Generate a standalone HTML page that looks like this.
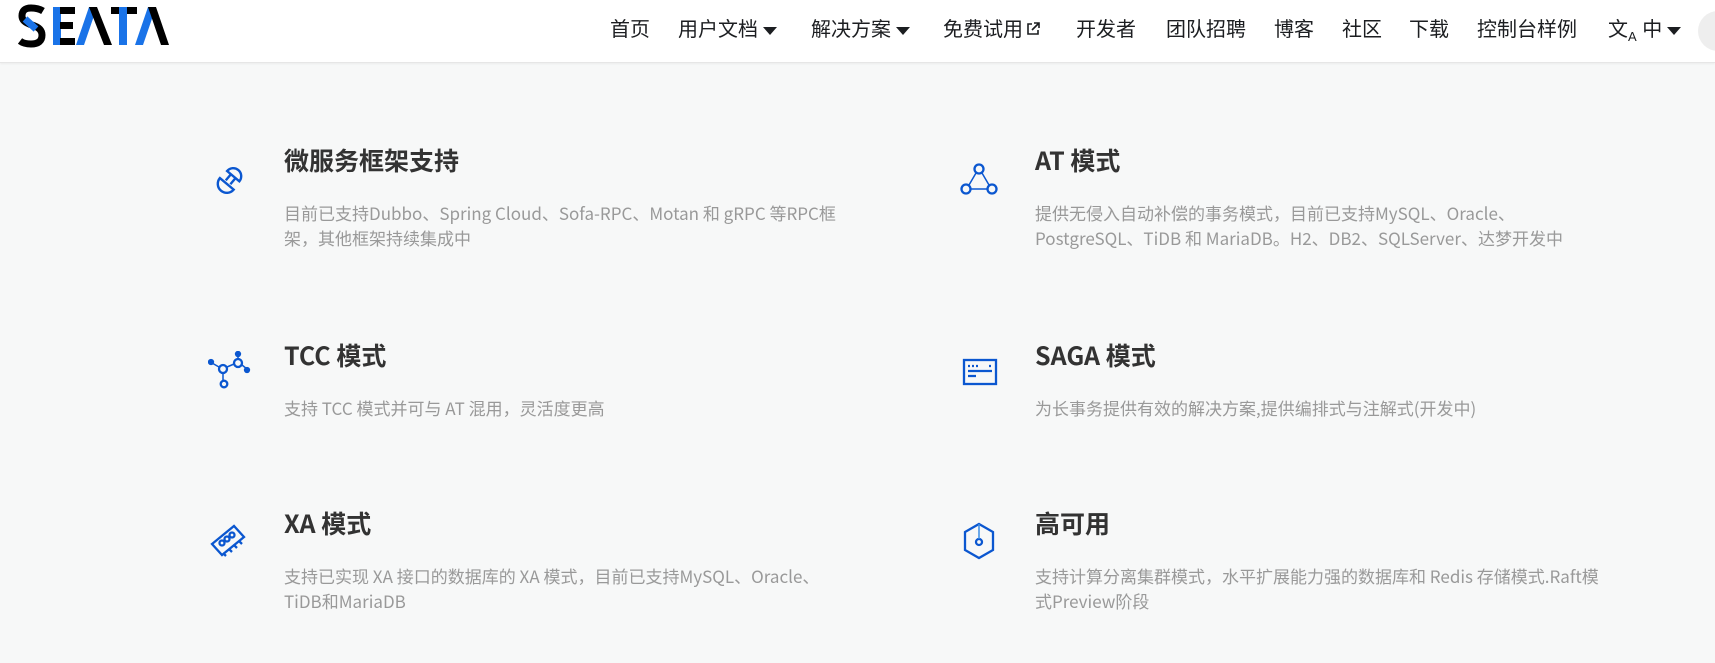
<!DOCTYPE html>
<html><head><meta charset="utf-8"><style>
*{margin:0;padding:0;box-sizing:border-box}
body{width:1715px;height:663px;overflow:hidden;background:#f7f8f8;font-family:"Liberation Sans","Noto Sans CJK SC",sans-serif;position:relative}
.hdr{position:absolute;left:0;top:0;width:1715px;height:63px;background:#fff;border-bottom:1px solid #e6e6e6;box-shadow:0 1px 2px rgba(0,0,0,.05)}
.logo{position:absolute;left:0;top:0}
.nav{position:absolute;top:13px;font-size:20px;color:#1c1e21;white-space:nowrap}
.caret{display:inline-block;width:0;height:0;border-left:7px solid transparent;border-right:7px solid transparent;border-top:8px solid #1c1e21;vertical-align:middle;margin-left:5px}
.t{position:absolute;font-size:25px;font-weight:bold;color:#333;white-space:nowrap;font-family:"Noto Sans CJK SC",sans-serif;line-height:32px}
.d{position:absolute;font-size:17px;line-height:25px;color:#999;white-space:nowrap;font-family:"Noto Sans CJK SC",sans-serif}
svg.i{position:absolute}
</style></head><body>
<div class="hdr">
<svg class="logo" width="180" height="50" viewBox="0 0 180 50">
<path d="M43 11 Q38 8 31 8 Q22 8 22 16 Q22 22 32 25 Q42 28 42 35 Q42 44 31 44 Q24 44 20 41" fill="none" stroke="#000" stroke-width="7"/>
<path d="M25 19 L36 29" stroke="#1a73e8" stroke-width="7"/>
<rect x="53" y="7" width="8" height="38" fill="#1a73e8"/>
<rect x="60" y="7" width="15" height="7" fill="#000"/><rect x="60" y="22" width="13" height="7" fill="#000"/><rect x="60" y="38" width="15" height="7" fill="#000"/>
<path d="M76 45 L89 7 L97 7 L84 45Z" fill="#1a73e8"/><path d="M89 7 L97 7 L112 45 L104 45Z" fill="#000"/>
<rect x="111" y="7" width="26" height="7" fill="#000"/><rect x="119" y="7" width="8" height="38" fill="#1a73e8"/>
<path d="M135 45 L148 7 L156 7 L143 45Z" fill="#1a73e8"/><path d="M148 7 L156 7 L169 45 L161 45Z" fill="#000"/>
</svg>
<div class="nav" style="left:610px">首页</div>
<div class="nav" style="left:678px">用户文档<span class="caret"></span></div>
<div class="nav" style="left:811px">解决方案<span class="caret"></span></div>
<div class="nav" style="left:943px">免费试用<svg width="14" height="14" viewBox="0 0 14 14" style="margin-left:3px"><path d="M6 2H2v10h10V8M8 1h5v5M13 1L6 8" fill="none" stroke="#1c1e21" stroke-width="1.6"/></svg></div>
<div class="nav" style="left:1076px">开发者</div>
<div class="nav" style="left:1166px">团队招聘</div>
<div class="nav" style="left:1274px">博客</div>
<div class="nav" style="left:1342px">社区</div>
<div class="nav" style="left:1409px">下载</div>
<div class="nav" style="left:1477px">控制台样例</div>
<div class="nav" style="left:1608px">文<sub style="font-size:13px">A</sub> 中<span class="caret"></span></div>
<div style="position:absolute;left:1698px;top:11px;width:40px;height:40px;border-radius:50%;background:#eee"></div>
</div>

<svg class="i" style="left:210px;top:160px" width="40" height="40" viewBox="-20 -20 40 40" fill="none" stroke="#0b57d0" stroke-width="2.4"><g transform="rotate(40)"><path d="M-8 -5 A8 8 0 0 1 8 -5 Z"/><path d="M-3 -5V3M3 -5V3"/><path d="M-9 5 H9 A9 9 0 0 1 -9 5 Z"/></g></svg>
<div class="t" style="left:284px;top:144px">微服务框架支持</div>
<div class="d" style="left:284px;top:200px">目前已支持Dubbo、Spring Cloud、Sofa-RPC、Motan 和 gRPC 等RPC框<br>架，其他框架持续集成中</div>

<svg class="i" style="left:960px;top:163px" width="38" height="33" viewBox="0 0 38 33" fill="none" stroke="#0b57d0" stroke-width="2.3"><circle cx="19" cy="6" r="4.5"/><circle cx="6" cy="26" r="4.5"/><circle cx="32" cy="26" r="4.5"/><path d="M16 10L9 22M22 10L29 22M10.5 26h17" stroke-width="1.5"/></svg>
<div class="t" style="left:1035px;top:144px">AT 模式</div>
<div class="d" style="left:1035px;top:200px">提供无侵入自动补偿的事务模式，目前已支持MySQL、Oracle、<br>PostgreSQL、TiDB 和 MariaDB。H2、DB2、SQLServer、达梦开发中</div>

<svg class="i" style="left:208px;top:351px" width="44" height="40" viewBox="0 0 44 40" fill="none" stroke="#0b57d0" stroke-width="2.3"><circle cx="15" cy="18" r="4"/><circle cx="30" cy="12" r="4"/><circle cx="16" cy="33" r="3.3"/><path d="M4 12L11 16M19 16L26 13M15 22v8M30 8V4M34 14l5 4" stroke-width="1.5"/><circle cx="3" cy="11" r="2" fill="#0b57d0"/><circle cx="30" cy="3" r="2" fill="#0b57d0"/><circle cx="39" cy="19" r="2" fill="#0b57d0"/></svg>
<div class="t" style="left:284px;top:339px">TCC 模式</div>
<div class="d" style="left:284px;top:395px">支持 TCC 模式并可与 AT 混用，灵活度更高</div>

<svg class="i" style="left:962px;top:358px" width="36" height="28" viewBox="0 0 36 28" fill="none" stroke="#0b57d0" stroke-width="2.3"><rect x="2" y="2" width="32" height="24"/><path d="M6 8h2M10 8h2M14 8h2M27 8h2M6 13h24M6 18h8"/></svg>
<div class="t" style="left:1035px;top:339px">SAGA 模式</div>
<div class="d" style="left:1035px;top:395px">为长事务提供有效的解决方案,提供编排式与注解式(开发中)</div>

<svg class="i" style="left:210px;top:522px" width="38" height="36" viewBox="0 0 38 36" fill="none" stroke="#0b57d0" stroke-width="2.3"><path d="M2 22L24 4L34 15L12 33Z"/><circle cx="12" cy="21" r="2.5"/><circle cx="17" cy="17" r="2.5"/><circle cx="22" cy="13" r="2.5"/><path d="M29 19l3 3M24 23l3 3M19 27l3 3M13 31l3 3"/></svg>
<div class="t" style="left:284px;top:507px">XA 模式</div>
<div class="d" style="left:284px;top:563px">支持已实现 XA 接口的数据库的 XA 模式，目前已支持MySQL、Oracle、<br>TiDB和MariaDB</div>

<svg class="i" style="left:962px;top:522px" width="34" height="38" viewBox="0 0 34 38" fill="none" stroke="#0b57d0" stroke-width="2.3"><path d="M17 2L31 10V28L17 36L3 28V10Z"/><circle cx="17" cy="20" r="3"/><path d="M17 2v15" stroke="#3a8ee6" stroke-width="1.5"/></svg>
<div class="t" style="left:1035px;top:507px">高可用</div>
<div class="d" style="left:1035px;top:563px">支持计算分离集群模式，水平扩展能力强的数据库和 Redis 存储模式.Raft模<br>式Preview阶段</div>
</body></html>
